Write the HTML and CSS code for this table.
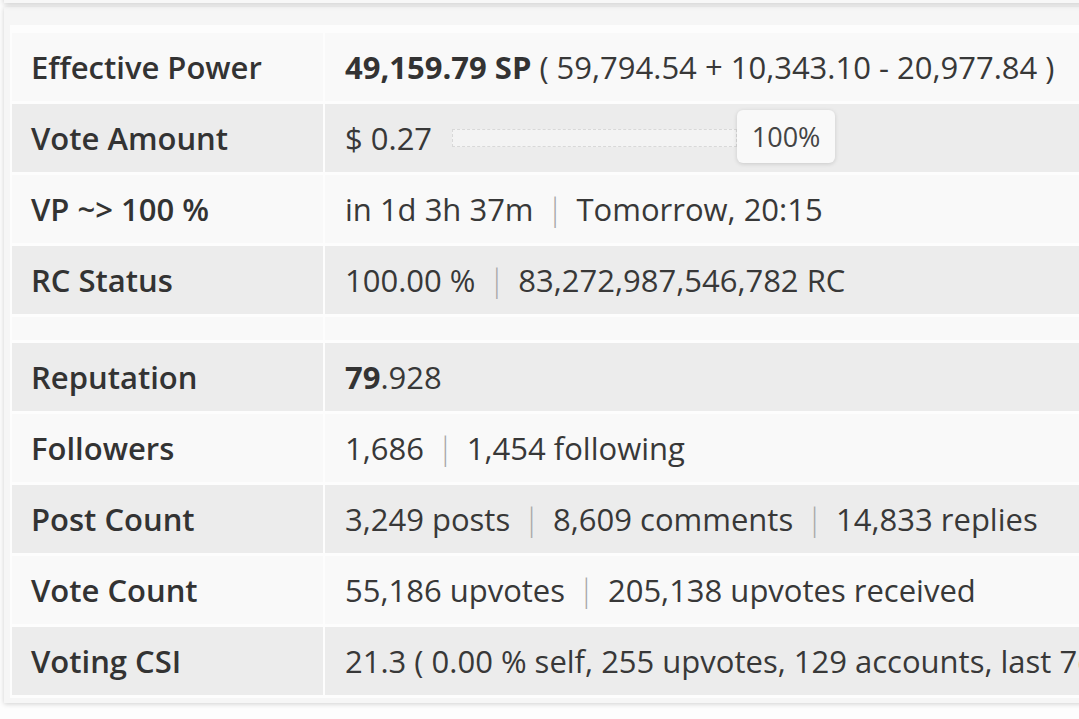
FILE: index.html
```html
<!DOCTYPE html>
<html>
<head>
<meta charset="utf-8">
<link rel="stylesheet" href="styles.css">
</head>
<body>
<div class="topcard"></div>
<div class="panel">
  <table class="stats">
    <tr class="light">
      <td class="label">Effective Power</td>
      <td class="value"><b>49,159.79 SP</b> ( 59,794.54 + 10,343.10 - 20,977.84 )</td>
    </tr>
    <tr class="grey">
      <td class="label">Vote Amount</td>
      <td class="value"><div class="vote"><span>$ 0.27</span><div class="bar"><div class="fill"></div><div class="tip">100%</div></div></div></td>
    </tr>
    <tr class="light">
      <td class="label">VP ~&gt; 100 %</td>
      <td class="value">in 1d 3h 37m <span class="sep">|</span> Tomorrow, 20:15</td>
    </tr>
    <tr class="grey">
      <td class="label">RC Status</td>
      <td class="value">100.00 % <span class="sep">|</span> 83,272,987,546,782 RC</td>
    </tr>
    <tr class="light spacer">
      <td class="label"></td>
      <td class="value"></td>
    </tr>
    <tr class="grey">
      <td class="label">Reputation</td>
      <td class="value"><b>79</b>.928</td>
    </tr>
    <tr class="light">
      <td class="label">Followers</td>
      <td class="value">1,686 <span class="sep">|</span> 1,454 following</td>
    </tr>
    <tr class="grey">
      <td class="label">Post Count</td>
      <td class="value">3,249 posts <span class="sep">|</span> 8,609 comments <span class="sep">|</span> 14,833 replies</td>
    </tr>
    <tr class="light">
      <td class="label">Vote Count</td>
      <td class="value">55,186 upvotes <span class="sep">|</span> 205,138 upvotes received</td>
    </tr>
    <tr class="grey">
      <td class="label">Voting CSI</td>
      <td class="value">21.3 ( 0.00 % self, 255 upvotes, 129 accounts, last 7d )</td>
    </tr>
  </table>
</div>
</body>
</html>
```

FILE: styles.css
```css
html, body {
  margin: 0;
  padding: 0;
  background: #fdfdfd;
  overflow: hidden;
  width: 1079px;
  height: 719px;
}
body {
  font-family: "Open Sans", "Noto Sans", sans-serif;
  color: #333;
}
.topcard {
  height: 40px;
  margin-top: -37px;
  margin-left: 4px;
  width: 1200px;
  background: #f7f7f7;
  box-shadow: 0 1px 6px rgba(0,0,0,0.22);
  position: relative;
  z-index: 1;
}
.panel {
  margin-top: 4px;
  margin-left: 4px;
  width: 1400px;
  background: #f6f6f6;
  padding: 18px 0 5px 6px;
  box-shadow: 0 1px 5px rgba(0,0,0,0.18);
}
.stats {
  border-collapse: separate;
  border-spacing: 2px 3px;
  background: #fdfdfd;
  width: 1390px;
  font-size: 31px;
  padding-top: 5px;
}
.stats td {
  height: 68px;
  padding: 0 0 0 20px;
  line-height: 42px;
  white-space: nowrap;
  vertical-align: middle;
}
.stats .label {
  width: 292px;
  font-weight: 600;
  color: #333;
  font-size: 31px;
  padding-left: 19px;
}
.stats .value {
  color: #383838;
}
.stats b {
  font-weight: 700;
  color: #333;
}
.light td { background: #f9f9f9; }
.grey td { background: #ececec; }
.spacer td { height: 23px; }
.sep {
  color: #a8a8a8;
  font-weight: 300;
  padding: 0 5px;
}
.vote {
  display: flex;
  align-items: center;
}
.bar {
  position: relative;
  margin-left: 20px;
  width: 283px;
  height: 16px;
  border: 1px dashed #d8d8d8;
  background: #f3f3f3;
}
.fill {
  height: 100%;
  width: 100%;
}
.tip {
  position: absolute;
  left: 284px;
  top: -20px;
  width: 98px;
  height: 53px;
  box-sizing: border-box;
  background: #f9f9f9;
  border-radius: 6px;
  box-shadow: 0 1px 4px rgba(0,0,0,0.15);
  font-size: 27px;
  line-height: 53px;
  text-align: center;
  color: #444;
}
```
